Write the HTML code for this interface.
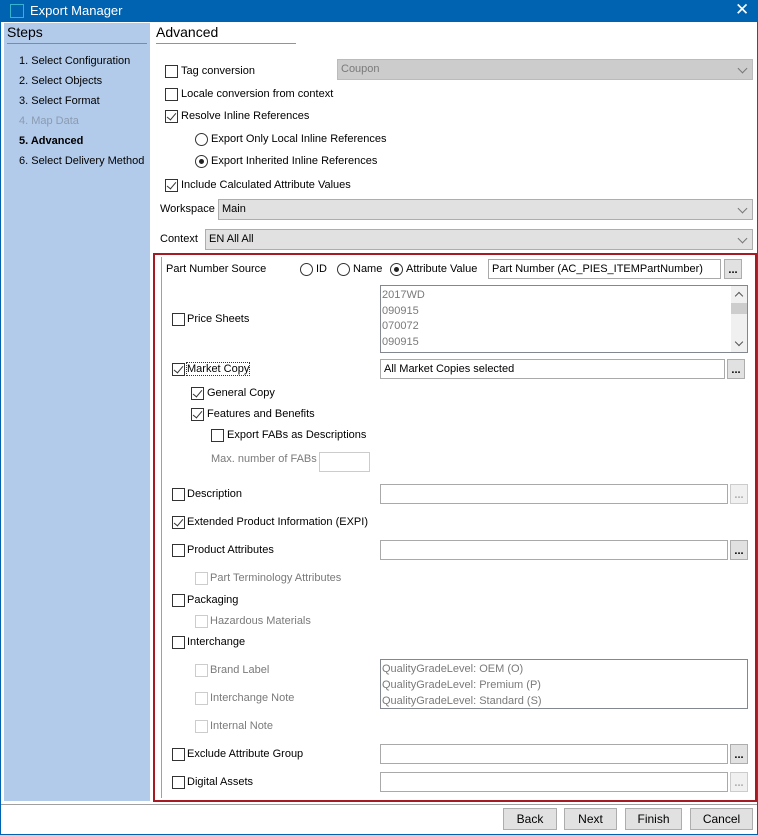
<!DOCTYPE html>
<html><head><meta charset="utf-8"><style>
*{box-sizing:border-box;margin:0;padding:0}
body{width:758px;height:835px;position:relative;overflow:hidden;background:#fff;font-family:"Liberation Sans",sans-serif;font-size:11px;color:#000}
.a{position:absolute;white-space:nowrap}
.cb{position:absolute;width:13px;height:13px;border:1px solid #333;background:#fff}
.cb.d{border-color:#ccc}
.cb.c::after{content:"";position:absolute;left:3px;top:0px;width:4px;height:8px;border:solid #333;border-width:0 1px 1px 0;transform:rotate(40deg)}
.rb{position:absolute;width:13px;height:13px;border:1px solid #333;border-radius:50%;background:#fff}
.rb.c::after{content:"";position:absolute;left:3px;top:3px;width:5px;height:5px;border-radius:50%;background:#222}
.tb{position:absolute;border:1px solid #a9a9a9;background:#fff;padding:0 3px;height:20px;line-height:18px}
.btn{position:absolute;width:18px;height:20px;border:1px solid #adadad;background:#e1e1e1;text-align:center;font-weight:bold;line-height:20px;font-size:11px}
.btn.d{color:#aaa;background:#f0f0f0;border-color:#ccc}
.cmb{position:absolute;border:1px solid #adadad;background:#e1e1e1;height:21px;padding:0 3px;line-height:19px}
.cmb::after{content:"";position:absolute;right:6px;top:5px;width:6px;height:6px;border:solid #777;border-width:0 1px 1px 0;transform:rotate(45deg)}
.g{color:#7a7a7a}
.bb{position:absolute;top:808px;height:22px;border:1px solid #adadad;background:#e1e1e1;text-align:center;line-height:20px;font-size:12px}
</style></head><body>
<div class="a" style="left:0;top:0;width:758px;height:22px;background:#0063b1"></div>
<div class="a" style="left:10px;top:4px;width:14px;height:14px;border:1px solid #35b4d0"></div>
<div class="a" style="left:30px;top:3px;color:#fff;font-size:13px">Export Manager</div>
<div class="a" style="left:735px;top:0px;color:#fff;font-size:17px">✕</div>
<div class="a" style="left:0;top:22px;width:1px;height:813px;background:#0063b1"></div>
<div class="a" style="left:757px;top:22px;width:1px;height:813px;background:#0063b1"></div>
<div class="a" style="left:0;top:834px;width:758px;height:1px;background:#0063b1"></div>

<div class="a" style="left:4px;top:23px;width:146px;height:778px;background:#b3cbeb"></div>
<div class="a" style="left:7px;top:24px;font-size:14px">Steps</div>
<div class="a" style="left:7px;top:43px;width:140px;height:1px;background:#808a99"></div>
<div class="a" style="left:19px;top:55px">1. Select Configuration</div>
<div class="a" style="left:19px;top:75px">2. Select Objects</div>
<div class="a" style="left:19px;top:95px">3. Select Format</div>
<div class="a" style="left:19px;top:115px;color:#8a9bb0">4. Map Data</div>
<div class="a" style="left:19px;top:135px;font-weight:bold">5. Advanced</div>
<div class="a" style="left:19px;top:155px">6. Select Delivery Method</div>

<div class="a" style="left:156px;top:24px;font-size:14px">Advanced</div>
<div class="a" style="left:156px;top:43px;width:140px;height:1px;background:#8a96a6"></div>

<div class="cb" style="left:165px;top:65px"></div><div class="a" style="left:181px;top:65px">Tag conversion</div>
<div class="cmb g" style="left:337px;top:59px;width:416px;background:#ccc;border-color:#bbb">Coupon</div>
<div class="cb" style="left:165px;top:88px"></div><div class="a" style="left:181px;top:88px">Locale conversion from context</div>
<div class="cb c" style="left:165px;top:110px"></div><div class="a" style="left:181px;top:110px">Resolve Inline References</div>
<div class="rb" style="left:195px;top:133px"></div><div class="a" style="left:211px;top:133px">Export Only Local Inline References</div>
<div class="rb c" style="left:195px;top:155px"></div><div class="a" style="left:211px;top:155px">Export Inherited Inline References</div>
<div class="cb c" style="left:165px;top:179px"></div><div class="a" style="left:181px;top:179px">Include Calculated Attribute Values</div>
<div class="a" style="left:160px;top:203px">Workspace</div>
<div class="cmb" style="left:218px;top:199px;width:535px">Main</div>
<div class="a" style="left:160px;top:233px">Context</div>
<div class="cmb" style="left:205px;top:229px;width:548px">EN All All</div>

<div class="a" style="left:153px;top:253px;width:604px;height:549px;border:2px solid #a61b23"></div>
<div class="a" style="left:161px;top:257px;width:1px;height:541px;background:#a0a0a0"></div>

<div class="a" style="left:166px;top:263px">Part Number Source</div>
<div class="rb" style="left:300px;top:263px"></div><div class="a" style="left:316px;top:263px">ID</div>
<div class="rb" style="left:337px;top:263px"></div><div class="a" style="left:353px;top:263px">Name</div>
<div class="rb c" style="left:390px;top:263px"></div><div class="a" style="left:406px;top:263px">Attribute Value</div>
<div class="tb" style="left:488px;top:259px;width:233px">Part Number (AC_PIES_ITEMPartNumber)</div>
<div class="btn" style="left:724px;top:259px">...</div>

<div class="a" style="left:380px;top:285px;width:368px;height:68px;border:1px solid #828790"></div>
<div class="a g" style="left:382px;top:288px;line-height:15.5px">2017WD<br>090915<br>070072<br>090915</div>
<div class="a" style="left:731px;top:286px;width:16px;height:66px;background:#f0f0f0"></div>
<div class="a" style="left:731px;top:303px;width:16px;height:11px;background:#cdcdcd"></div>
<div class="a" style="left:736px;top:293px;width:6px;height:6px;border:solid #555;border-width:1px 0 0 1px;transform:rotate(45deg)"></div>
<div class="a" style="left:736px;top:339px;width:6px;height:6px;border:solid #555;border-width:0 1px 1px 0;transform:rotate(45deg)"></div>
<div class="cb" style="left:172px;top:313px"></div><div class="a" style="left:187px;top:313px">Price Sheets</div>

<div class="cb c" style="left:172px;top:363px"></div><div class="a" style="left:187px;top:363px;outline:1px dotted #333">Market Copy</div>
<div class="tb" style="left:380px;top:359px;width:345px">All Market Copies selected</div>
<div class="btn" style="left:727px;top:359px">...</div>
<div class="cb c" style="left:191px;top:387px"></div><div class="a" style="left:207px;top:387px">General Copy</div>
<div class="cb c" style="left:191px;top:408px"></div><div class="a" style="left:207px;top:408px">Features and Benefits</div>
<div class="cb" style="left:211px;top:429px"></div><div class="a" style="left:227px;top:429px">Export FABs as Descriptions</div>
<div class="a g" style="left:211px;top:453px">Max. number of FABs</div>
<div class="a" style="left:319px;top:452px;width:51px;height:20px;border:1px solid #ccc"></div>

<div class="cb" style="left:172px;top:488px"></div><div class="a" style="left:187px;top:488px">Description</div>
<div class="tb" style="left:380px;top:484px;width:348px"></div><div class="btn d" style="left:730px;top:484px">...</div>
<div class="cb c" style="left:172px;top:516px"></div><div class="a" style="left:187px;top:516px">Extended Product Information (EXPI)</div>
<div class="cb" style="left:172px;top:544px"></div><div class="a" style="left:187px;top:544px">Product Attributes</div>
<div class="tb" style="left:380px;top:540px;width:348px"></div><div class="btn" style="left:730px;top:540px">...</div>
<div class="cb d" style="left:195px;top:572px"></div><div class="a g" style="left:210px;top:572px">Part Terminology Attributes</div>
<div class="cb" style="left:172px;top:594px"></div><div class="a" style="left:187px;top:594px">Packaging</div>
<div class="cb d" style="left:195px;top:615px"></div><div class="a g" style="left:210px;top:615px">Hazardous Materials</div>
<div class="cb" style="left:172px;top:636px"></div><div class="a" style="left:187px;top:636px">Interchange</div>
<div class="cb d" style="left:195px;top:664px"></div><div class="a g" style="left:210px;top:664px">Brand Label</div>
<div class="cb d" style="left:195px;top:692px"></div><div class="a g" style="left:210px;top:692px">Interchange Note</div>
<div class="cb d" style="left:195px;top:720px"></div><div class="a g" style="left:210px;top:720px">Internal Note</div>
<div class="a" style="left:380px;top:659px;width:368px;height:50px;border:1px solid #828790"></div>
<div class="a g" style="left:382px;top:661px;line-height:16px">QualityGradeLevel: OEM (O)<br>QualityGradeLevel: Premium (P)<br>QualityGradeLevel: Standard (S)</div>
<div class="cb" style="left:172px;top:748px"></div><div class="a" style="left:187px;top:748px">Exclude Attribute Group</div>
<div class="tb" style="left:380px;top:744px;width:348px"></div><div class="btn" style="left:730px;top:744px">...</div>
<div class="cb" style="left:172px;top:776px"></div><div class="a" style="left:187px;top:776px">Digital Assets</div>
<div class="tb" style="left:380px;top:772px;width:348px"></div><div class="btn d" style="left:730px;top:772px">...</div>

<div class="a" style="left:1px;top:804px;width:756px;height:1px;background:#a0a0a0"></div>
<div class="bb" style="left:503px;width:54px">Back</div>
<div class="bb" style="left:564px;width:53px">Next</div>
<div class="bb" style="left:625px;width:57px">Finish</div>
<div class="bb" style="left:690px;width:63px">Cancel</div>
</body></html>
